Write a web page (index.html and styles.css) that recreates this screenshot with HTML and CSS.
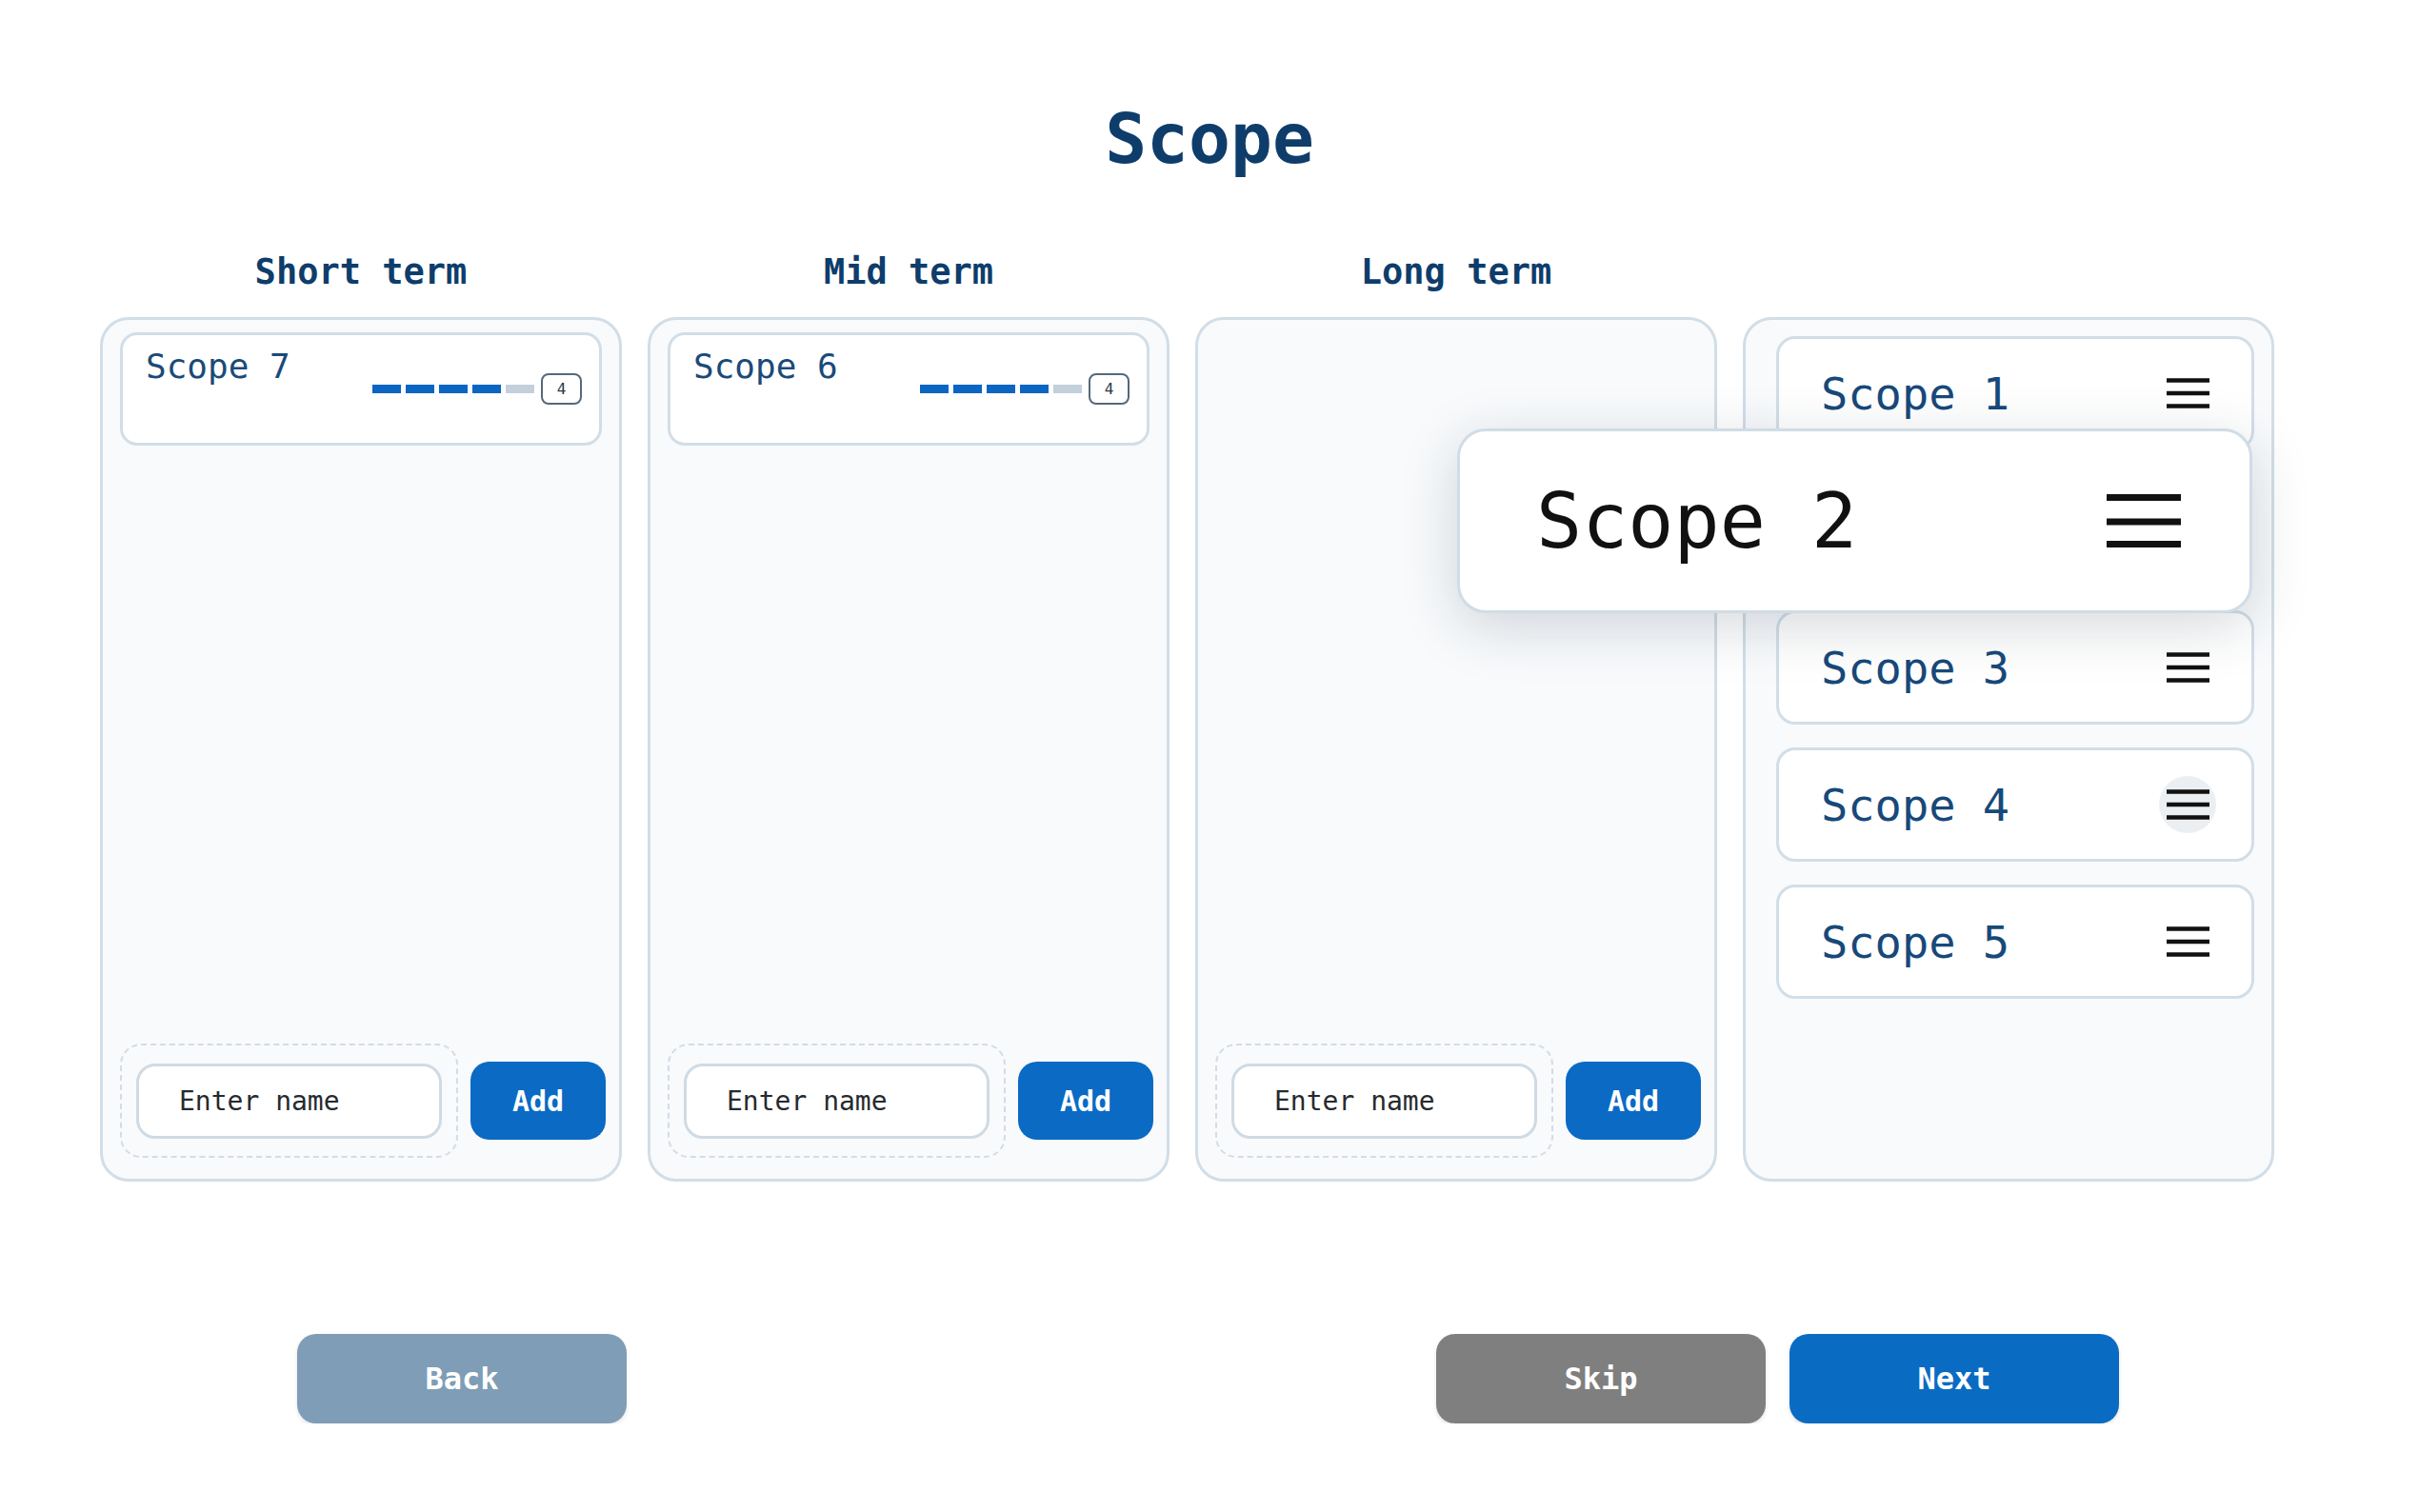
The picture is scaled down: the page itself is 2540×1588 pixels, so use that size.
FILE: index.html
```html
<!DOCTYPE html>
<html lang="en">
<head>
  <meta charset="UTF-8" />
  <meta name="viewport" content="width=device-width, initial-scale=1.0" />
  <title>Scope</title>
  <link rel="stylesheet" href="styles.css">
</head>
<body>
  <h1 class="title">Scope</h1>

  <main class="board">
    <!-- Short term -->
    <section class="col">
      <h2 class="col-head">Short term</h2>
      <div class="box">
        <div class="cards">
          <div class="card">
            <span class="card-name">Scope 7</span>
            <div class="meter">
              <span class="seg on"></span><span class="seg on"></span><span class="seg on"></span><span class="seg on"></span><span class="seg"></span>
              <span class="badge">4</span>
            </div>
          </div>
        </div>
        <div class="add-row">
          <div class="drop"><input class="name-input" type="text" placeholder="Enter name"></div>
          <button class="btn-add">Add</button>
        </div>
      </div>
    </section>

    <!-- Mid term -->
    <section class="col">
      <h2 class="col-head">Mid term</h2>
      <div class="box">
        <div class="cards">
          <div class="card">
            <span class="card-name">Scope 6</span>
            <div class="meter">
              <span class="seg on"></span><span class="seg on"></span><span class="seg on"></span><span class="seg on"></span><span class="seg"></span>
              <span class="badge">4</span>
            </div>
          </div>
        </div>
        <div class="add-row">
          <div class="drop"><input class="name-input" type="text" placeholder="Enter name"></div>
          <button class="btn-add">Add</button>
        </div>
      </div>
    </section>

    <!-- Long term -->
    <section class="col">
      <h2 class="col-head">Long term</h2>
      <div class="box">
        <div class="cards"></div>
        <div class="add-row">
          <div class="drop"><input class="name-input" type="text" placeholder="Enter name"></div>
          <button class="btn-add">Add</button>
        </div>
      </div>
    </section>

    <!-- Unsorted pool -->
    <section class="col col-pool">
      <h2 class="col-head">&nbsp;</h2>
      <div class="box pool">
        <div class="item">
          <span>Scope 1</span>
          <svg class="grip" viewBox="0 0 45 32"><path d="M0 2.5h45M0 16h45M0 29.5h45" /></svg>
        </div>
        <div class="item slot"></div>
        <div class="item">
          <span>Scope 3</span>
          <svg class="grip" viewBox="0 0 45 32"><path d="M0 2.5h45M0 16h45M0 29.5h45" /></svg>
        </div>
        <div class="item">
          <span>Scope 4</span>
          <span class="grip-hover">
            <svg class="grip" viewBox="0 0 45 32"><path d="M0 2.5h45M0 16h45M0 29.5h45" /></svg>
          </span>
        </div>
        <div class="item">
          <span>Scope 5</span>
          <svg class="grip" viewBox="0 0 45 32"><path d="M0 2.5h45M0 16h45M0 29.5h45" /></svg>
        </div>

        <!-- card being dragged -->
        <div class="dragging">
          <span>Scope 2</span>
          <svg class="grip-big" viewBox="0 0 78 56"><path d="M0 3.5h78M0 29h78M0 52.5h78" /></svg>
        </div>
      </div>
    </section>
  </main>

  <footer class="nav">
    <button class="btn btn-back">Back</button>
    <div class="nav-right">
      <button class="btn btn-skip">Skip</button>
      <button class="btn btn-next">Next</button>
    </div>
  </footer>
</body>
</html>
```

FILE: styles.css
```css
body {
  margin: 0;
  background: #fff;
  font-family: "DejaVu Sans Mono", "Liberation Mono", monospace;
  color: #0f3e6c;
}
.title {
  margin: 0;
  padding-top: 102px;
  font-size: 73px;
  line-height: 88px;
  text-align: center;
  color: #0e3d6b;
}
.board {
  display: grid;
  grid-template-columns: 548px 548px 548px 558px;
  column-gap: 27px;
  margin: 74px 0 0 105px;
}
.col {
  display: flex;
  flex-direction: column;
}
.col-head {
  margin: 0 0 25px;
  font-size: 37px;
  line-height: 44px;
  text-align: center;
  color: #0e3d6b;
}
.box {
  box-sizing: border-box;
  height: 908px;
  border: 3px solid #d2dee7;
  border-radius: 30px;
  background: #f8fafc;
  padding: 13px 18px 22px 18px;
  display: flex;
  flex-direction: column;
  justify-content: space-between;
}
.card {
  box-sizing: border-box;
  height: 119px;
  background: #fff;
  border: 3px solid #d2dee7;
  border-radius: 18px;
  padding: 11px 18px 0 24px;
  display: flex;
  justify-content: space-between;
  align-items: flex-start;
}
.card-name {
  font-size: 36px;
  line-height: 44px;
  color: #1a4a79;
}
.meter {
  display: flex;
  align-items: center;
  gap: 5px;
  margin-top: 29px;
}
.seg {
  width: 30px;
  height: 9px;
  background: #c3d0dc;
}
.seg.on {
  background: #0b65c2;
}
.badge {
  box-sizing: border-box;
  width: 43px;
  height: 33px;
  margin-left: 2px;
  border: 2px solid #56687a;
  border-radius: 8px;
  font-size: 16px;
  line-height: 29px;
  text-align: center;
  color: #2b3a48;
}
.add-row {
  display: flex;
  align-items: center;
  gap: 13px;
  margin-right: -4px;
}
.drop {
  box-sizing: border-box;
  width: 355px;
  height: 120px;
  border: 2.5px dashed #d3dce5;
  border-radius: 22px;
  padding: 0 15px;
  display: flex;
  align-items: center;
}
.name-input {
  box-sizing: border-box;
  width: 100%;
  height: 79px;
  border: 3px solid #cfdbe4;
  border-radius: 20px;
  background: #fff;
  padding: 0 0 0 42px;
  font-family: inherit;
  font-size: 28px;
  outline: none;
}
.name-input::placeholder {
  color: #262a2e;
}
.btn-add {
  width: 142px;
  height: 82px;
  border: none;
  border-radius: 20px;
  background: #0a6ac4;
  color: #fff;
  font-family: inherit;
  font-weight: bold;
  font-size: 30px;
}
.pool {
  position: relative;
  justify-content: flex-start;
  gap: 24px;
  padding: 17px 18px 20px 32px;
}
.item {
  box-sizing: border-box;
  height: 120px;
  flex: none;
  background: #fff;
  border: 3px solid #d2dee7;
  border-radius: 20px;
  padding: 0 44px 0 44px;
  display: flex;
  justify-content: space-between;
  align-items: center;
  font-size: 47px;
  color: #17497a;
}
.item.slot {
  visibility: hidden;
}
.grip {
  width: 45px;
  height: 32px;
  stroke: #111;
  stroke-width: 4.5;
}
.grip-hover {
  width: 60px;
  height: 60px;
  margin-right: -7px;
  border-radius: 50%;
  background: #eceff2;
  display: flex;
  align-items: center;
  justify-content: center;
}
.dragging {
  position: absolute;
  left: -303px;
  top: 114px;
  box-sizing: border-box;
  width: 835px;
  height: 194px;
  background: #fff;
  border: 3px solid #d0dce6;
  border-radius: 30px;
  box-shadow: 0 14px 60px rgba(30, 45, 60, 0.18);
  padding: 0 72px 0 80px;
  display: flex;
  justify-content: space-between;
  align-items: center;
  font-size: 80px;
  color: #111;
}
.grip-big {
  width: 78px;
  height: 56px;
  stroke: #111;
  stroke-width: 7;
}
.nav {
  width: 1913px;
  margin: 160px 0 0 312px;
  display: flex;
  justify-content: space-between;
}
.nav-right {
  display: flex;
  gap: 25px;
}
.btn {
  width: 346px;
  height: 94px;
  border: none;
  border-radius: 20px;
  color: #fff;
  font-family: inherit;
  font-weight: bold;
  font-size: 32px;
  box-shadow: 0 2px 4px rgba(0, 0, 0, 0.12);
}
.btn-back {
  background: #7f9db6;
}
.btn-skip {
  background: #7f7f7f;
}
.btn-next {
  background: #0a6bc3;
}
```
